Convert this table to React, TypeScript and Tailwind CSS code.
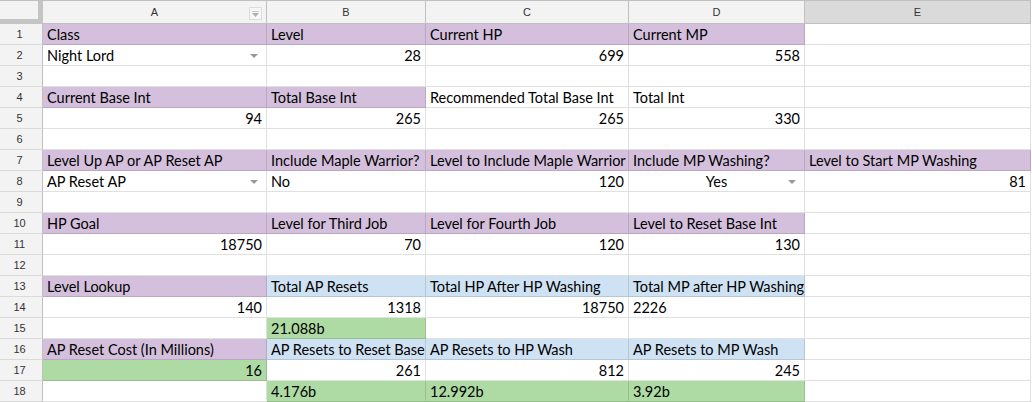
import React from "react";

type Cell = { t?: string; bg?: "p" | "b" | "g"; a?: "l" | "r" | "c"; dd?: boolean };

const P = (t: string): Cell => ({ t, bg: "p" });
const B = (t: string): Cell => ({ t, bg: "b" });
const R = (t: string): Cell => ({ t, a: "r" });
const E: Cell = {};

const rows: Cell[][] = [
  [P("Class"), P("Level"), P("Current HP"), P("Current MP"), E],
  [{ t: "Night Lord", dd: true }, R("28"), R("699"), R("558"), E],
  [E, E, E, E, E],
  [P("Current Base Int"), P("Total Base Int"), { t: "Recommended Total Base Int" }, { t: "Total Int" }, E],
  [R("94"), R("265"), R("265"), R("330"), E],
  [E, E, E, E, E],
  [
    P("Level Up AP or AP Reset AP"),
    P("Include Maple Warrior?"),
    P("Level to Include Maple Warrior"),
    P("Include MP Washing?"),
    P("Level to Start MP Washing"),
  ],
  [{ t: "AP Reset AP", dd: true }, { t: "No" }, R("120"), { t: "Yes", a: "c", dd: true }, R("81")],
  [E, E, E, E, E],
  [P("HP Goal"), P("Level for Third Job"), P("Level for Fourth Job"), P("Level to Reset Base Int"), E],
  [R("18750"), R("70"), R("120"), R("130"), E],
  [E, E, E, E, E],
  [P("Level Lookup"), B("Total AP Resets"), B("Total HP After HP Washing"), B("Total MP after HP Washing"), E],
  [R("140"), R("1318"), R("18750"), { t: "2226" }, E],
  [E, { t: "21.088b", bg: "g" }, E, E, E],
  [P("AP Reset Cost (In Millions)"), B("AP Resets to Reset Base"), B("AP Resets to HP Wash"), B("AP Resets to MP Wash"), E],
  [{ t: "16", a: "r", bg: "g" }, R("261"), R("812"), R("245"), E],
  [E, { t: "4.176b", bg: "g" }, { t: "12.992b", bg: "g" }, { t: "3.92b", bg: "g" }, E],
];

const Arrow = () => (
  <svg width="8" height="4" viewBox="0 0 8 4" className="absolute right-[8px] top-[9px]">
    <path d="M0 0 L8 0 L4 4 Z" fill="#999999" />
  </svg>
);

function DataCell({ c }: { c: Cell }) {
  const bg =
    c.bg === "p" ? "bg-[#d4c0dc]" : c.bg === "b" ? "bg-[#cfe2f3]" : c.bg === "g" ? "bg-[#aedaa3]" : "bg-white";
  const align = c.a === "r" ? "justify-end" : c.a === "c" ? "justify-center" : "justify-start";
  return (
    <div
      className={`relative flex items-center ${align} ${bg} border-r border-b border-[#0000001f] px-[4px] pt-[1px] overflow-visible whitespace-nowrap text-[14.5px] leading-[19px] text-black`}
      style={{ fontFamily: "Lato, 'Open Sans', sans-serif" }}
    >
      {c.t}
      {c.dd && <Arrow />}
    </div>
  );
}

export default function App() {
  const cols = ["A", "B", "C", "D", "E"];
  return (
    <div className="w-[1032px] h-[402px] overflow-hidden bg-white">
      <div
        className="grid"
        style={{ gridTemplateColumns: "43px 224px 159px 203px 176px 226px", gridTemplateRows: "24px repeat(18, 21px)" }}
      >
        <div className="bg-[#f3f3f3] border-t border-[#c0c0c0] border-r-[5px] border-r-[#c4c4c4] border-b-[5px] border-b-[#c4c4c4]" />
        {cols.map((l, i) => (
          <div
            key={l}
            className={`relative flex items-center justify-center border-t border-r border-b border-[#c0c0c0] ${
              l === "E" ? "bg-[#dadada]" : "bg-[#f3f3f3]"
            } text-[11px] text-[#333]`}
            style={{ fontFamily: "'Liberation Sans', Arial, sans-serif" }}
          >
            {l}
            {i === 0 && (
              <div className="absolute right-[4px] top-[6px] w-[13px] h-[13px] border border-[#dcdcdc] bg-[#f7f7f7] flex flex-col items-center justify-center">
                <div className="w-[7px] h-[1px] bg-[#c8c8c8] mb-[1px]" />
                <svg width="7" height="4" viewBox="0 0 7 4">
                  <path d="M0 0 L7 0 L3.5 4 Z" fill="#b0b0b0" />
                </svg>
              </div>
            )}
          </div>
        ))}
        {rows.map((r, ri) => (
          <React.Fragment key={ri}>
            <div
              className="flex items-center justify-center bg-[#f3f3f3] border-r border-r-[#c0c0c0] border-b border-b-[#dadada] text-[11px] text-[#333] pr-[3px]"
              style={{ fontFamily: "'Liberation Sans', Arial, sans-serif" }}
            >
              {ri + 1}
            </div>
            {r.map((c, ci) => (
              <DataCell key={ci} c={c} />
            ))}
          </React.Fragment>
        ))}
      </div>
    </div>
  );
}
